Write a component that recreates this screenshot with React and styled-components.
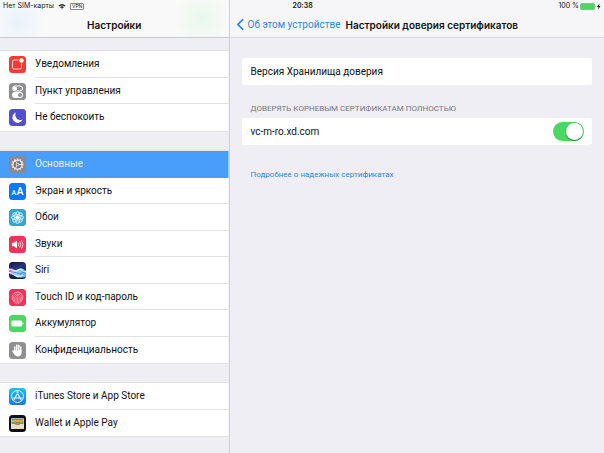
import React, { useState } from "react";
import styled, { createGlobalStyle } from "styled-components";

const GlobalStyle = createGlobalStyle`
  * {
    box-sizing: border-box;
  }
  body {
    margin: 0;
    background: #efeef4;
    color: #111;
    font-family: Roboto, "Liberation Sans", sans-serif;
    font-size: 10px;
    line-height: 14px;
  }
`;

function NotificationsIcon() {
  return (
    <Icon viewBox="0 0 34 34">
      <rect width="34" height="34" rx="7" fill="#f23b30" />
      <rect x="7" y="8" width="18" height="18" rx="3" fill="none" stroke="#ffd5d0" strokeWidth="2" />
      <circle cx="25" cy="9" r="6" fill="#f23b30" />
      <circle cx="25" cy="9" r="4.500" fill="#fff" />
    </Icon>
  );
}

function ControlCenterIcon() {
  return (
    <Icon viewBox="0 0 34 34">
      <rect width="34" height="34" rx="7" fill="#8e8e93" />
      <rect x="7" y="6" width="20" height="10" rx="5" fill="none" stroke="#fff" strokeWidth="2" />
      <circle cx="12" cy="11" r="4" fill="#fff" />
      <rect x="6" y="18" width="22" height="12" rx="6" fill="#fff" />
      <circle cx="22" cy="24" r="4" fill="#8e8e93" />
    </Icon>
  );
}

function MoonIcon() {
  return (
    <Icon viewBox="0 0 34 34">
      <rect width="34" height="34" rx="7" fill="#524fcb" />
      <path d="M14 7 A10.500 10.500 0 1 0 27 21 A10 10 0 0 1 14 7 Z" fill="#fff" />
    </Icon>
  );
}

function GearIcon() {
  const angles = [0, 30, 60, 90, 120, 150];
  return (
    <Icon viewBox="0 0 34 34">
      <rect width="34" height="34" rx="7" fill="#8a8a90" />
      <g stroke="#f4efed" strokeWidth="3">
        {angles.map((a) => (
          <line key={a} x1="17" y1="5" x2="17" y2="8" transform={`rotate(${a} 17 17)`} />
        ))}
        {angles.map((a) => (
          <line key={a} x1="17" y1="26" x2="17" y2="29" transform={`rotate(${a} 17 17)`} />
        ))}
      </g>
      <circle cx="17" cy="17" r="9" fill="#77777d" stroke="#f4efed" strokeWidth="2.500" />
      <path d="M17 17H26M17 17L12.500 9M17 17L12.500 25" stroke="#f4efed" strokeWidth="2" />
      <circle cx="17" cy="17" r="2.500" fill="#77777d" stroke="#f4efed" strokeWidth="1.500" />
    </Icon>
  );
}

function DisplayIcon() {
  return (
    <Icon viewBox="0 0 34 34">
      <rect width="34" height="34" rx="7" fill="#0b78f5" />
      <text x="5" y="24" fontSize="14" fontWeight="500" fill="#fff">A</text>
      <text x="15" y="24" fontSize="21" fontWeight="500" fill="#fff">A</text>
    </Icon>
  );
}

function WallpaperIcon() {
  const petals = [0, 45, 90, 135, 180, 225, 270, 315];
  return (
    <Icon viewBox="0 0 34 34">
      <rect width="34" height="34" rx="7" fill="#38a4cb" />
      {petals.map((a) => (
        <ellipse
          key={a}
          cx="17"
          cy="10.500"
          rx="4"
          ry="5.500"
          fill="#8fd3ea"
          fillOpacity="0.4"
          stroke="#e3f7fc"
          strokeWidth="1.500"
          transform={`rotate(${a} 17 17)`}
        />
      ))}
      <circle cx="17" cy="17" r="3" fill="#fff" />
    </Icon>
  );
}

function SoundsIcon() {
  return (
    <Icon viewBox="0 0 34 34">
      <rect width="34" height="34" rx="7" fill="#f0325a" />
      <path d="M6 13.500H10L16 9V25L10 20.500H6Z" fill="#fff" />
      <g fill="none" stroke="#ffe0e6" strokeWidth="1.800" strokeLinecap="round">
        <path d="M19 14Q21 17 19 20" />
        <path d="M22 11.500Q26 17 22 22.500" />
        <path d="M25.500 9Q31 17 25.500 25" />
      </g>
    </Icon>
  );
}

function SiriIcon() {
  return (
    <Icon viewBox="0 0 34 34">
      <defs>
        <linearGradient id="siriBack" x1="0" y1="0" x2="0.3" y2="1">
          <stop offset="0" stopColor="#14122e" />
          <stop offset="0.4" stopColor="#2b3480" />
          <stop offset="1" stopColor="#0f1c38" />
        </linearGradient>
        <linearGradient id="siriWave" x1="0" y1="0" x2="1" y2="0">
          <stop offset="0" stopColor="#b95fe0" />
          <stop offset="0.4" stopColor="#a9d8fa" />
          <stop offset="1" stopColor="#5fb6ea" />
        </linearGradient>
        <clipPath id="siriClip">
          <rect width="34" height="34" rx="7" />
        </clipPath>
      </defs>
      <g clipPath="url(#siriClip)">
        <rect width="34" height="34" fill="url(#siriBack)" />
        <path d="M0 13C7 11 10 17 14 16S20 11 26 13S30 17 34 17V29C29 33 24 30 19 31S11 25 0 24Z" fill="url(#siriWave)" />
        <path d="M0 15C6 14 9 19 14 18S21 13 26 16S30 19 34 19" fill="none" stroke="#f4fbff" strokeWidth="1.800" />
        <path d="M0 21C6 21 9 25 13 27S23 30 28 26" fill="none" stroke="#e8f7ff" strokeWidth="2" />
        <path d="M9 22C14 18 19 26 24 23S30 21 33 24" fill="none" stroke="#3579c4" strokeWidth="1.800" />
      </g>
    </Icon>
  );
}

function TouchIdIcon() {
  return (
    <Icon viewBox="0 0 34 34">
      <rect width="34" height="34" rx="7" fill="#f0325a" />
      <g fill="none" stroke="#ffb3c2" strokeWidth="1.400" strokeLinecap="round">
        <path d="M10 8Q17 3 24 8" />
        <path d="M7 21C4 11 11 7 17 7S30 11 27 21" />
        <path d="M9 25C6 14 12 10 17 10S28 14 25 25" />
        <path d="M12 28C9 17 13 13 17 13S25 17 22 28" />
        <path d="M15 29.500C12.500 19 15 16 17 16S21.500 19 19 29.500" />
        <path d="M17 19V27" />
      </g>
    </Icon>
  );
}

function BatteryIcon() {
  return (
    <Icon viewBox="0 0 34 34">
      <rect width="34" height="34" rx="7" fill="#4cd663" />
      <rect x="5" y="11" width="21" height="12" rx="2" fill="#fff" />
      <path d="M27 14Q31 17 27 20Z" fill="#fff" />
    </Icon>
  );
}

function HandIcon() {
  return (
    <Icon viewBox="0 0 34 34">
      <rect width="34" height="34" rx="7" fill="#8e8e93" />
      <g stroke="#fff" strokeWidth="3" strokeLinecap="round">
        <path d="M11.500 10V20M15.500 6.500V19M19.500 6.500V19M23.500 10V20" />
        <path d="M8 18L12 24" />
      </g>
      <path d="M10 17H25V22Q24 29 17.500 29Q12.500 29 10 23Z" fill="#fff" />
    </Icon>
  );
}

function AppStoreIcon() {
  return (
    <Icon viewBox="0 0 34 34">
      <defs>
        <linearGradient id="storeBack" x1="0" y1="0" x2="0" y2="1">
          <stop offset="0" stopColor="#1ac3f9" />
          <stop offset="1" stopColor="#1c72ee" />
        </linearGradient>
      </defs>
      <rect width="34" height="34" rx="7" fill="url(#storeBack)" />
      <circle cx="17" cy="17" r="12" fill="none" stroke="#fff" strokeWidth="1.800" />
      <path d="M18 8L10 24M16 8L24 24M8 20H26" stroke="#fff" strokeWidth="2.200" strokeLinecap="round" />
    </Icon>
  );
}

function WalletIcon() {
  return (
    <Icon viewBox="0 0 34 34">
      <rect width="34" height="34" rx="7" fill="#111" />
      <rect x="4" y="6" width="26" height="22" rx="2" fill="#e4ddd0" />
      <rect x="5" y="7" width="24" height="3" fill="#5298a5" />
      <rect x="5" y="10" width="24" height="3" fill="#e5a93c" />
      <rect x="5" y="13" width="24" height="3" fill="#6da557" />
      <rect x="5" y="16" width="24" height="4" fill="#db695b" />
      <path d="M4 18H12Q13 21 17 21T22 18H30V26Q30 28 28 28H6Q4 28 4 26Z" fill="#e4ddd0" />
    </Icon>
  );
}

const groups = [
  [
    { title: "Уведомления", icon: NotificationsIcon },
    { title: "Пункт управления", icon: ControlCenterIcon },
    { title: "Не беспокоить", icon: MoonIcon },
  ],
  [
    { title: "Основные", icon: GearIcon },
    { title: "Экран и яркость", icon: DisplayIcon },
    { title: "Обои", icon: WallpaperIcon },
    { title: "Звуки", icon: SoundsIcon },
    { title: "Siri", icon: SiriIcon },
    { title: "Touch ID и код-пароль", icon: TouchIdIcon },
    { title: "Аккумулятор", icon: BatteryIcon },
    { title: "Конфиденциальность", icon: HandIcon },
  ],
  [
    { title: "iTunes Store и App Store", icon: AppStoreIcon },
    { title: "Wallet и Apple Pay", icon: WalletIcon },
  ],
];

function App() {
  const [selected, setSelected] = useState("Основные");
  const [trusted, setTrusted] = useState(true);

  return (
    <>
      <GlobalStyle />
      <Screen>
        <Sidebar>
          <SidebarHeader>
            <Status>
              <span>Нет SIM-карты</span>
              <WifiGlyph viewBox="0 0 16 14">
                <path d="M1 5Q8 -1 15 5L13 7Q8 3 3 7ZM4 8Q8 5 12 8L10 10Q8 9 6 10ZM6.500 11H9.500L8 13Z" fill="#222" />
              </WifiGlyph>
              <Vpn>VPN</Vpn>
            </Status>
            <Bar>
              <SidebarTitle>Настройки</SidebarTitle>
            </Bar>
          </SidebarHeader>
          <Groups>
            {groups.map((group) => (
              <Group key={group[0].title}>
                {group.map(({ title, icon: RowIcon }) => (
                  <Item key={title}>
                    <Row $active={selected === title} onClick={() => setSelected(title)}>
                      <RowIcon />
                      <RowLabel $active={selected === title}>{title}</RowLabel>
                    </Row>
                  </Item>
                ))}
              </Group>
            ))}
          </Groups>
        </Sidebar>
        <Detail>
          <DetailHeader>
            <DetailStatus>
              <Clock>20:38</Clock>
              <Charge>
                <span>100 %</span>
                <ChargeGlyph viewBox="0 0 44 14">
                  <rect x="1" y="1" width="28" height="12" rx="2" fill="#4cd663" stroke="#59a767" strokeWidth="1" />
                  <path d="M30 5Q32 7 30 9Z" fill="#333" />
                  <path d="M39 1L34 8H37L36 13L41 6H38Z" fill="#111" />
                </ChargeGlyph>
              </Charge>
            </DetailStatus>
            <DetailBar>
              <Back href="#about">
                <Chevron viewBox="0 0 8 14">
                  <path d="M7 1L1 7L7 13" fill="none" stroke="#1a80e8" strokeWidth="2" />
                </Chevron>
                Об этом устройстве
              </Back>
              <DetailTitle>Настройки доверия сертификатов</DetailTitle>
            </DetailBar>
          </DetailHeader>
          <Content>
            <Card>Версия Хранилища доверия</Card>
            <Caption>Доверять корневым сертификатам полностью</Caption>
            <Card>
              <label htmlFor="trust">vc-m-ro.xd.com</label>
              <Toggle
                id="trust"
                type="checkbox"
                role="switch"
                checked={trusted}
                onChange={(e) => setTrusted(e.target.checked)}
              />
            </Card>
            <More href="#more">Подробнее о надежных сертификатах</More>
          </Content>
        </Detail>
      </Screen>
    </>
  );
}

const Screen = styled.div`
  display: grid;
  grid-template-columns: 38% 1fr;
  min-height: 100vh;
`;

const Sidebar = styled.nav`
  border-right: 1px solid #cfcfd4;
`;

const SidebarHeader = styled.header`
  border-bottom: 1px solid #c9c9ce;
  background:
    radial-gradient(circle at 8% 60%, #e9f3fb 0, transparent 28px),
    radial-gradient(circle at 88% 50%, #e9f8eb 0, transparent 28px),
    #f9f9fa;
`;

const Status = styled.div`
  display: flex;
  align-items: center;
  gap: 4px;
  height: 12px;
  padding-left: 3px;
  color: #222;
  font-family: Inter, Roboto, sans-serif;
  font-size: 7px;
`;

const WifiGlyph = styled.svg`
  width: 8px;
  height: 7px;
`;

const Vpn = styled.span`
  padding: 0 1px;
  border: 1px solid #888;
  border-radius: 1px;
  font-size: 5px;
  line-height: 5px;
`;

const Bar = styled.div`
  display: flex;
  align-items: center;
  justify-content: center;
  height: 25px;
`;

const SidebarTitle = styled.h1`
  margin: 0;
  font-family: Inter, Roboto, sans-serif;
  font-size: 10px;
  font-weight: 600;
`;

const Groups = styled.div`
  display: flex;
  flex-direction: column;
  gap: 20px;
  padding: 13px 0 16px;
`;

const Group = styled.ul`
  margin: 0;
  padding: 0;
  list-style: none;
  background: #fff;
  box-shadow: 0 0 0 1px #e2e1e7;
  clip-path: inset(-1px 0);
`;

const Item = styled.li`
  height: 27px;

  &:nth-child(even) {
    height: 26px;
  }
`;

const Row = styled.button`
  display: flex;
  align-items: center;
  gap: 9px;
  width: 100%;
  height: 100%;
  padding: 0 0 0 9px;
  border: 0;
  background: ${(props) => (props.$active ? "#4a9efb" : "transparent")};
  color: ${(props) => (props.$active ? "#e2f1ff" : "#111")};
  font: inherit;
  text-align: left;
  cursor: pointer;
`;

const Icon = styled.svg`
  flex: none;
  width: 17px;
  height: 17px;
`;

const RowLabel = styled.span`
  display: flex;
  flex: 1;
  align-items: center;
  height: 100%;
  border-bottom: 1px solid ${(props) => (props.$active ? "transparent" : "#e2e1e6")};

  ${Item}:last-child & {
    border-color: transparent;
  }
`;

const Detail = styled.main`
  min-width: 0;
`;

const DetailHeader = styled.header`
  border-bottom: 1px solid #d9d9e0;
  background: #f6f6f9;
`;

const DetailStatus = styled.div`
  display: flex;
  align-items: center;
  justify-content: space-between;
  height: 12px;
  padding: 0 2px 0 63px;
  font-family: Inter, Roboto, sans-serif;
  font-size: 7px;
`;

const Clock = styled.time`
  font-weight: 600;
`;

const Charge = styled.div`
  display: flex;
  align-items: center;
  gap: 1px;
`;

const ChargeGlyph = styled.svg`
  width: 22px;
  height: 7px;
`;

const DetailBar = styled.div`
  display: flex;
  align-items: center;
  gap: 5px;
  height: 25px;
  padding-left: 7px;
  white-space: nowrap;
`;

const Back = styled.a`
  display: flex;
  align-items: center;
  gap: 4px;
  color: #2d86d9;
  text-decoration: none;
`;

const Chevron = styled.svg`
  width: 7px;
  height: 13px;
`;

const DetailTitle = styled.h2`
  margin: 0;
  font-family: Inter, Roboto, sans-serif;
  font-size: 10px;
  font-weight: 600;
`;

const Content = styled.div`
  padding: 20px 12px;
`;

const Card = styled.section`
  display: flex;
  align-items: center;
  justify-content: space-between;
  height: 27px;
  padding: 0 8px 0 9px;
  border-radius: 2px;
  background: #fff;
`;

const Caption = styled.h3`
  margin: 17px 0 2px;
  padding-left: 9px;
  color: #77777d;
  font-size: 8px;
  font-weight: 400;
  text-transform: uppercase;
`;

const Toggle = styled.input`
  display: flex;
  justify-content: flex-end;
  width: 31px;
  height: 19px;
  margin: 0;
  padding: 1px;
  border-radius: 10px;
  background: #4cd663;
  appearance: none;
  cursor: pointer;

  &::before {
    content: "";
    width: 17px;
    height: 17px;
    border-radius: 50%;
    background: #fff;
    box-shadow: 0 1px 1px #2f7f3e;
  }

  &:not(:checked) {
    justify-content: flex-start;
    background: #d8d8dc;
  }
`;

const More = styled.a`
  display: block;
  margin-top: 23px;
  padding-left: 9px;
  color: #2d86d9;
  font-size: 8px;
  text-decoration: none;
`;

export default App;
